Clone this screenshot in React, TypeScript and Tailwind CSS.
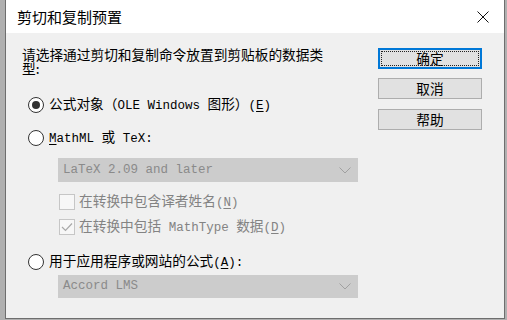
import React from "react";

const L = ({ children }: { children: React.ReactNode }) => (
  <span className="font-['Liberation_Mono',monospace] text-[12.5px]">{children}</span>
);

const U = ({ children }: { children: React.ReactNode }) => (
  <span className="underline underline-offset-2">{children}</span>
);

const Radio = ({ checked }: { checked?: boolean }) => (
  <div className="w-[16px] h-[16px] rounded-full border border-[#333333] bg-white flex items-center justify-center shrink-0">
    {checked && <div className="w-[8px] h-[8px] rounded-full bg-[#333333]" />}
  </div>
);

const Check = ({ checked }: { checked?: boolean }) => (
  <div className="w-[16px] h-[16px] border border-[#c6c6c6] bg-[#f7f7f7] flex items-center justify-center shrink-0">
    {checked && (
      <svg width="12" height="10" viewBox="0 0 12 10">
        <path d="M1 5 L4.5 8.5 L11 1.5" fill="none" stroke="#a8a8a8" strokeWidth="1.2" />
      </svg>
    )}
  </div>
);

const Dropdown = ({ text, h }: { text: string; h: string }) => (
  <div className={`ml-[36px] w-[300px] ${h} bg-[#cccccc] flex items-center justify-between pl-[5px] pr-[7px]`}>
    <span className="font-['Liberation_Mono',monospace] text-[12.5px] text-[#8a8a8a]">{text}</span>
    <svg width="12" height="7" viewBox="0 0 12 7">
      <path d="M0.5 0.5 L6 6 L11.5 0.5" fill="none" stroke="#a0a0a0" strokeWidth="1" />
    </svg>
  </div>
);

export default function App() {
  return (
    <div className="w-[507px] h-[320px] bg-[#b0b0b0] overflow-hidden font-['Noto_Sans_CJK_SC',sans-serif] text-black">
      <div className="ml-[5px] w-[500px] h-[319px] border-x border-b border-[#6e6e6e] flex flex-col">
        <div className="h-[33px] bg-white flex items-center justify-between pl-[11px] pr-[15px] shrink-0">
          <span className="text-[15px] leading-none">剪切和复制预置</span>
          <svg width="12" height="12" viewBox="0 0 12 12">
            <path d="M0.5 0.5 L11.5 11.5 M11.5 0.5 L0.5 11.5" stroke="#111" strokeWidth="1" fill="none" />
          </svg>
        </div>
        <div className="flex-1 bg-[#f0f0f0] flex pl-[16px]">
          <div className="w-[336px] flex flex-col text-[13.7px]">
            <div className="mt-[14px] flex flex-col whitespace-nowrap">
              <span className="leading-[14px]">请选择通过剪切和复制命令放置到剪贴板的数据类</span>
              <span className="leading-[14px]">型:</span>
            </div>
            <div className="mt-[22px] h-[16px] flex items-center ml-[6px] whitespace-nowrap">
              <Radio checked />
              <span className="ml-[5px] leading-none">
                公式对象（<L>OLE Windows </L>图形）<L>(<U>E</U>)</L>
              </span>
            </div>
            <div className="mt-[17px] h-[16px] flex items-center ml-[6px] whitespace-nowrap">
              <Radio />
              <span className="ml-[5px] leading-none">
                <L><U>M</U>athML </L>或<L> TeX:</L>
              </span>
            </div>
            <div className="mt-[12px]">
              <Dropdown text="LaTeX 2.09 and later" h="h-[24px]" />
            </div>
            <div className="mt-[12px] h-[16px] flex items-center ml-[37px] whitespace-nowrap text-[#838383]">
              <Check />
              <span className="ml-[4px] leading-none">
                在转换中包含译者姓名<L>(<U>N</U>)</L>
              </span>
            </div>
            <div className="mt-[9px] h-[16px] flex items-center ml-[37px] whitespace-nowrap text-[#838383]">
              <Check checked />
              <span className="ml-[4px] leading-none">
                在转换中包括<L> MathType </L>数据<L>(<U>D</U>)</L>
              </span>
            </div>
            <div className="mt-[19px] h-[16px] flex items-center ml-[6px] whitespace-nowrap">
              <Radio />
              <span className="ml-[5px] leading-none">
                用于应用程序或网站的公式<L>(<U>A</U>):</L>
              </span>
            </div>
            <div className="mt-[5px]">
              <Dropdown text="Accord LMS" h="h-[23px]" />
            </div>
          </div>
          <div className="ml-[20px] flex flex-col text-[13.7px]">
            <div className="mt-[15px] relative w-[104px] h-[21px] bg-[#e1e1e1] border-2 border-[#0078d7] flex items-center justify-center leading-none">
              <div className="absolute inset-[1px] border border-dotted border-[#222]" />
              确定
            </div>
            <div className="mt-[9px] w-[104px] h-[21px] bg-[#e1e1e1] border border-[#adadad] flex items-center justify-center leading-none">
              取消
            </div>
            <div className="mt-[10px] w-[104px] h-[21px] bg-[#e1e1e1] border border-[#adadad] flex items-center justify-center leading-none">
              帮助
            </div>
          </div>
        </div>
      </div>
    </div>
  );
}
